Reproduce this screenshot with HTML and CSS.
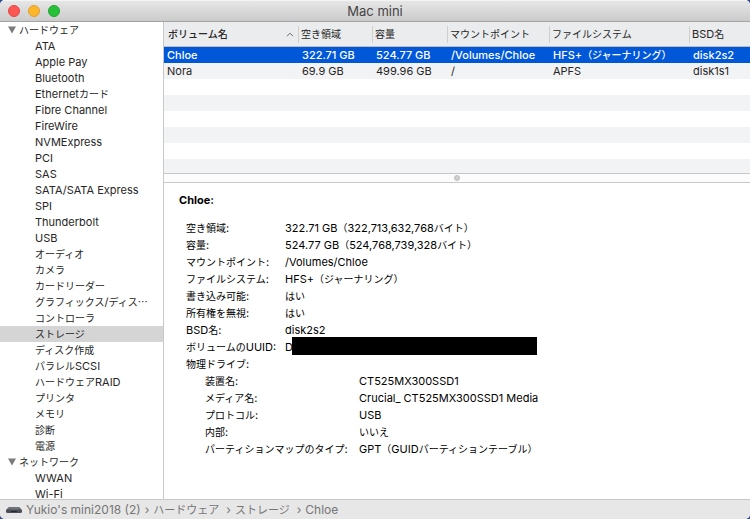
FILE: index.html
```html
<!DOCTYPE html>
<html lang="ja">
<head>
<meta charset="utf-8">
<title>Mac mini</title>
<link rel="stylesheet" href="styles.css">
</head>
<body>
<div class="window">
  <header class="titlebar">
    <div class="lights">
      <button class="light close" aria-label="閉じる"></button>
      <button class="light minimize" aria-label="しまう"></button>
      <button class="light zoom" aria-label="拡大"></button>
    </div>
    <h1>Mac mini</h1>
  </header>

  <div class="body">
    <nav class="sidebar">
      <button class="group"><svg viewBox="0 0 8 8" width="8" height="8"><path d="M0 0.5H8L4 7.5Z" fill="#7b7b7b"/></svg><span class="ja">ハードウェア</span></button>
      <ul>
        <li><a href="#">ATA</a></li>
        <li><a href="#">Apple Pay</a></li>
        <li><a href="#">Bluetooth</a></li>
        <li><a href="#">Ethernet<span class="ja">カード</span></a></li>
        <li><a href="#">Fibre Channel</a></li>
        <li><a href="#">FireWire</a></li>
        <li><a href="#">NVMExpress</a></li>
        <li><a href="#">PCI</a></li>
        <li><a href="#">SAS</a></li>
        <li><a href="#">SATA/SATA Express</a></li>
        <li><a href="#">SPI</a></li>
        <li><a href="#">Thunderbolt</a></li>
        <li><a href="#">USB</a></li>
        <li><a href="#"><span class="ja">オーディオ</span></a></li>
        <li><a href="#"><span class="ja">カメラ</span></a></li>
        <li><a href="#"><span class="ja">カードリーダー</span></a></li>
        <li><a href="#"><span class="ja">グラフィックス</span>/<span class="ja">ディス…</span></a></li>
        <li><a href="#"><span class="ja">コントローラ</span></a></li>
        <li><a href="#" class="selected" aria-current="page"><span class="ja">ストレージ</span></a></li>
        <li><a href="#"><span class="ja">ディスク作成</span></a></li>
        <li><a href="#"><span class="ja">パラレル</span>SCSI</a></li>
        <li><a href="#"><span class="ja">ハードウェア</span>RAID</a></li>
        <li><a href="#"><span class="ja">プリンタ</span></a></li>
        <li><a href="#"><span class="ja">メモリ</span></a></li>
        <li><a href="#"><span class="ja">診断</span></a></li>
        <li><a href="#"><span class="ja">電源</span></a></li>
      </ul>
      <button class="group"><svg viewBox="0 0 8 8" width="8" height="8"><path d="M0 0.5H8L4 7.5Z" fill="#7b7b7b"/></svg><span class="ja">ネットワーク</span></button>
      <ul>
        <li><a href="#">WWAN</a></li>
        <li><a href="#">Wi-Fi</a></li>
      </ul>
    </nav>

    <main class="content">
      <div class="volumes">
        <table>
          <colgroup>
            <col class="c-name"><col class="c-free"><col class="c-size"><col class="c-mount"><col class="c-fs"><col>
          </colgroup>
          <thead>
            <tr>
              <th aria-sort="ascending"><div class="head"><span class="ja">ボリューム名</span><svg viewBox="0 0 8 5" width="8" height="5"><path d="M1 4.2L4 1.2L7 4.2" fill="none" stroke="#666" stroke-width="1"/></svg></div></th>
              <th><div class="head"><span class="ja">空き領域</span></div></th>
              <th><div class="head"><span class="ja">容量</span></div></th>
              <th><div class="head"><span class="ja">マウントポイント</span></div></th>
              <th><div class="head"><span class="ja">ファイルシステム</span></div></th>
              <th><div class="head"><span>BSD<span class="ja">名</span></span></div></th>
            </tr>
          </thead>
          <tbody>
            <tr class="selected">
              <td>Chloe</td><td>322.71 GB</td><td>524.77 GB</td><td>/Volumes/Chloe</td><td>HFS+<span class="ja">（ジャーナリング）</span></td><td>disk2s2</td>
            </tr>
            <tr>
              <td>Nora</td><td>69.9 GB</td><td>499.96 GB</td><td>/</td><td>APFS</td><td>disk1s1</td>
            </tr>
          </tbody>
        </table>
        <div class="stripes"></div>
      </div>

      <div class="splitter"><span class="knob"></span></div>

      <section class="detail">
        <h2>Chloe:</h2>
        <dl>
          <dt><span class="ja">空き領域</span>:</dt><dd>322.71 GB<span class="ja">（</span>322,713,632,768<span class="ja">バイト）</span></dd>
          <dt><span class="ja">容量</span>:</dt><dd>524.77 GB<span class="ja">（</span>524,768,739,328<span class="ja">バイト）</span></dd>
          <dt><span class="ja">マウントポイント</span>:</dt><dd>/Volumes/Chloe</dd>
          <dt><span class="ja">ファイルシステム</span>:</dt><dd>HFS+<span class="ja">（ジャーナリング）</span></dd>
          <dt><span class="ja">書き込み可能</span>:</dt><dd><span class="ja">はい</span></dd>
          <dt><span class="ja">所有権を無視</span>:</dt><dd><span class="ja">はい</span></dd>
          <dt>BSD<span class="ja">名</span>:</dt><dd>disk2s2</dd>
          <dt><span class="ja">ボリュームの</span>UUID:</dt><dd class="masked">D<span class="mask"></span></dd>
          <dt><span class="ja">物理ドライブ</span>:</dt><dd></dd>
        </dl>
        <dl class="nested">
          <dt><span class="ja">装置名</span>:</dt><dd>CT525MX300SSD1</dd>
          <dt><span class="ja">メディア名</span>:</dt><dd>Crucial_ CT525MX300SSD1 Media</dd>
          <dt><span class="ja">プロトコル</span>:</dt><dd>USB</dd>
          <dt><span class="ja">内部</span>:</dt><dd><span class="ja">いいえ</span></dd>
          <dt><span class="ja">パーティションマップのタイプ</span>:</dt><dd>GPT<span class="ja">（</span>GUID<span class="ja">パーティションテーブル）</span></dd>
        </dl>
      </section>
    </main>
  </div>

  <footer class="pathbar">
    <svg class="mini" viewBox="0 0 16 8" width="16" height="8"><path d="M3 1H13L16 4V6Q16 7 14 7H2Q0 7 0 6V4Z" fill="#4b4f55"/><path d="M3 1H13L15 3.5H1Z" fill="#70757b"/><path d="M5 5.5H11" stroke="#25282c"/></svg>
    <span>Yukio's mini2018 (2)</span>
    <span class="sep">›</span>
    <span class="ja">ハードウェア</span>
    <span class="sep">›</span>
    <span class="ja">ストレージ</span>
    <span class="sep">›</span>
    <span>Chloe</span>
  </footer>
</div>
</body>
</html>
```
FILE: styles.css
```css
* { box-sizing: border-box; }

body {
  margin: 0;
  background: #2d4a8c;
  color: #262626;
  font: 11px/16px Inter, "Noto Sans CJK JP", sans-serif;
}

button {
  border: 0;
  padding: 0;
  background: none;
  color: inherit;
  font: inherit;
}

a { color: inherit; text-decoration: none; }

.ja {
  font-family: "Noto Sans CJK JP", sans-serif;
  font-size: 10px;
  line-height: 1;
}

.window {
  display: flex;
  flex-direction: column;
  height: 100vh;
  overflow: hidden;
  border-radius: 5px;
  background: #fff;
}

/* Title bar */
.titlebar {
  display: grid;
  grid-template-columns: 1fr auto 1fr;
  align-items: center;
  flex: none;
  height: 22px;
  padding: 0 8px;
  background: linear-gradient(#e6e6e6, #cbcbcb);
  border-top: 1px solid #f4f4f4;
  border-bottom: 1px solid #a3a3a3;
}

.titlebar h1 {
  margin: 0;
  color: #444;
  font-size: 13px;
  font-weight: 400;
}

.lights { display: flex; gap: 8px; }

.light {
  width: 12px;
  height: 12px;
  border: 1px solid;
  border-radius: 50%;
}

.close { background: #fc5753; border-color: #df4744; }
.minimize { background: #fdb529; border-color: #de9f34; }
.zoom { background: #27c138; border-color: #1fa52c; }

.body {
  display: flex;
  flex: 1;
  min-height: 0;
}

/* Sidebar */
.sidebar {
  flex: none;
  width: 164px;
  overflow: hidden;
  border-right: 1px solid #c8c8c8;
}

.sidebar ul { margin: 0; padding: 0; list-style: none; }

.sidebar a {
  display: block;
  height: 16px;
  padding-left: 35px;
  white-space: nowrap;
}

.sidebar a.selected { background: #d5d5d5; }

.group {
  display: flex;
  align-items: center;
  gap: 3px;
  width: 100%;
  height: 16px;
  padding-left: 8px;
}

/* Volume list */
.content {
  display: flex;
  flex: 1;
  flex-direction: column;
  min-width: 0;
}

.volumes {
  display: flex;
  flex: none;
  flex-direction: column;
  height: 152px;
  border-bottom: 1px solid #c8c8c8;
}

table {
  width: 100%;
  border-collapse: separate;
  border-spacing: 0;
  table-layout: fixed;
}

.c-name { width: 135px; }
.c-free { width: 74px; }
.c-size { width: 75px; }
.c-mount { width: 102px; }
.c-fs { width: 140px; }

th {
  height: 25px;
  padding: 0;
  background: #ebecee;
  border-bottom: 1px solid #bdbdbd;
  font-weight: 400;
  text-align: left;
}

.head {
  display: flex;
  align-items: center;
  justify-content: space-between;
  height: 17px;
  padding: 0 4px 0 2px;
  border-right: 1px solid #cfcfcf;
}

th:first-child .head { padding-left: 4px; font-weight: 500; }
th:last-child .head { border-right: 0; }

td {
  height: 16px;
  padding: 0 0 0 3px;
  line-height: 16px;
  white-space: nowrap;
}

tbody tr:nth-child(even) { background: #f2f3f5; }

tbody tr.selected {
  background: #0058d9;
  color: #fff;
  font-weight: 500;
}

.stripes {
  flex: 1;
  background: repeating-linear-gradient(#fff 0 16px, #f2f3f5 16px 32px);
}

.splitter {
  display: flex;
  align-items: center;
  flex: none;
  justify-content: center;
  height: 9px;
  background: #fcfcfc;
  border-bottom: 1px solid #c8c8c8;
}

.knob {
  width: 6px;
  height: 6px;
  border: 1px solid #bdbdbd;
  border-radius: 50%;
  background: #d0d0d0;
}

/* Volume details */
.detail {
  flex: 1;
  min-height: 0;
  padding: 9px 15px;
  color: #000;
  line-height: 17px;
}

.detail h2 {
  margin: 0 0 11px;
  font-size: 11px;
  font-weight: 700;
}

.detail dl {
  display: grid;
  grid-template-columns: 99px 1fr;
  grid-auto-rows: 17px;
  margin: 0 0 0 7px;
  white-space: nowrap;
}

.detail dl.nested {
  grid-template-columns: 154px 1fr;
  margin-left: 26px;
}

.detail dd { margin: 0; }

.masked { position: relative; }

.mask {
  position: absolute;
  top: -2px;
  left: 7px;
  width: 245px;
  height: 18px;
  background: #000;
}

/* Path bar */
.pathbar {
  display: flex;
  align-items: center;
  flex: none;
  gap: 4px;
  height: 20px;
  padding-left: 6px;
  background: #e7e7e7;
  border-top: 1px solid #c8c8c8;
  color: #757575;
  font-size: 12px;
}

.pathbar .ja {
  margin-right: 3px;
  font-size: 11px;
}
```
